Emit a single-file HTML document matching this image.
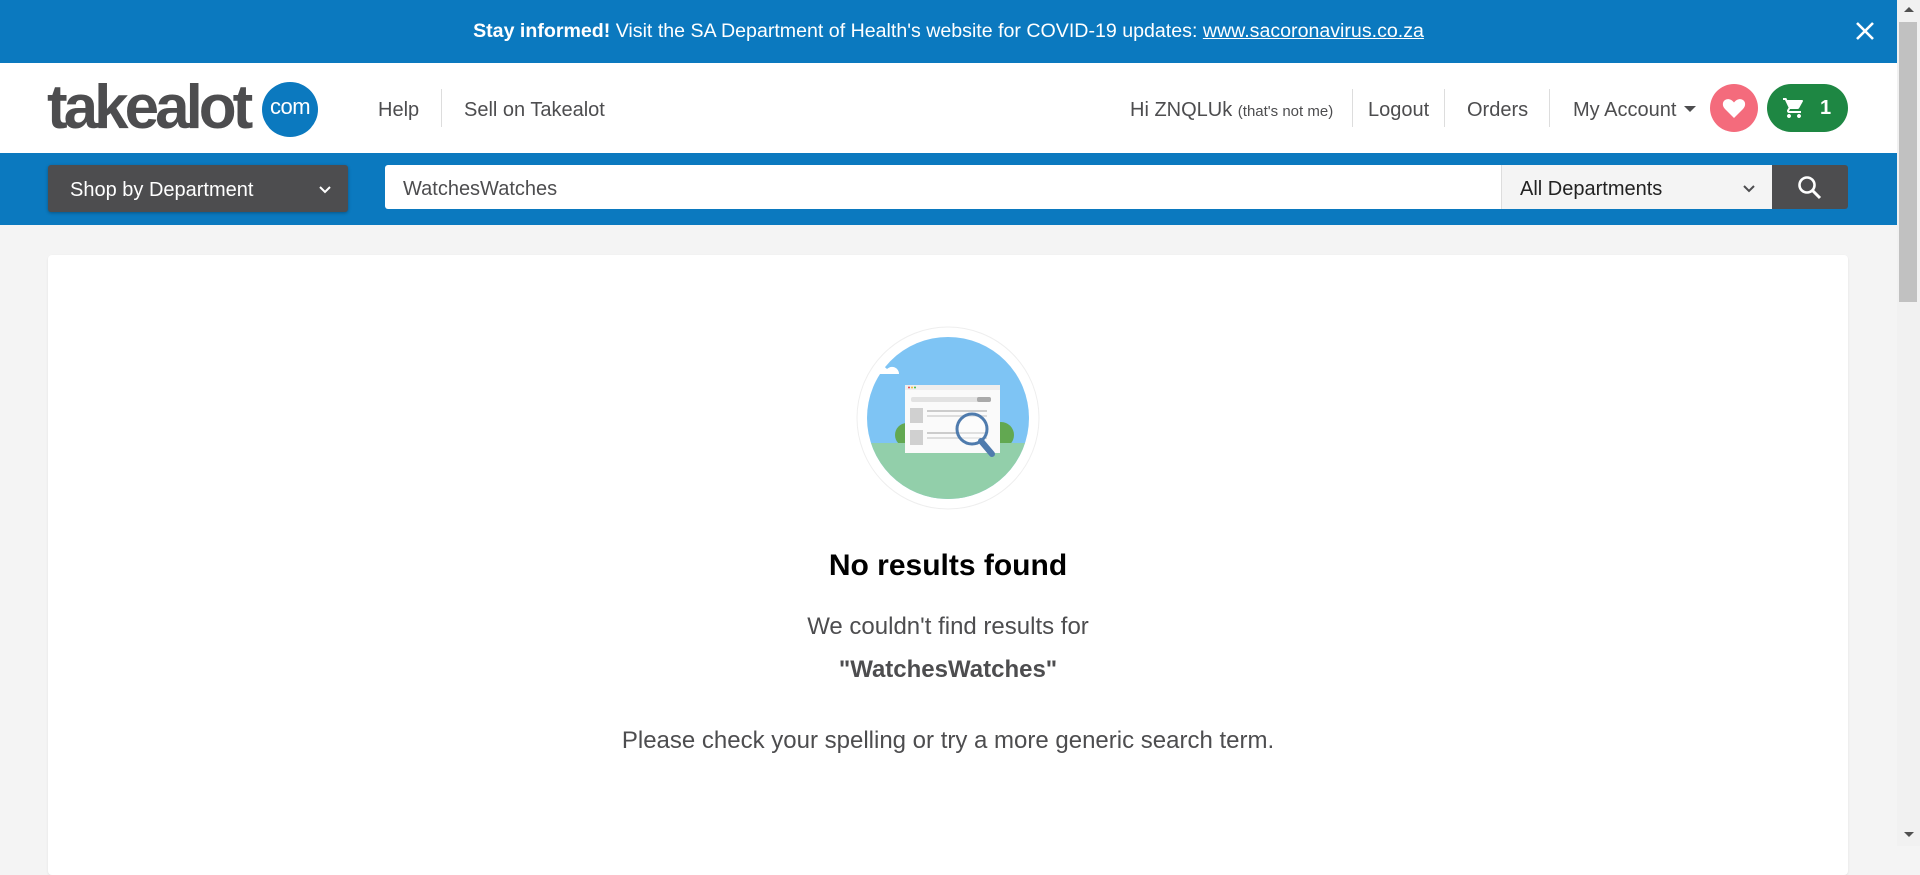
<!DOCTYPE html>
<html><head><meta charset="utf-8"><style>
*{margin:0;padding:0;box-sizing:border-box}
body{width:1920px;height:846px;overflow:hidden;background:#f4f4f4;font-family:"Liberation Sans",Arial,sans-serif;position:relative;color:#4d4d4f}
.abs{position:absolute}
#banner{left:0;top:0;width:1897px;height:63px;background:#0b79bf;color:#fff;font-size:19.6px;text-align:center;line-height:62px}
#banner a{color:#fff;text-decoration:underline}
#hdr{left:0;top:63px;width:1897px;height:90px;background:#fff}
#bar{left:0;top:153px;width:1897px;height:72px;background:#0b79bf}
.nav{font-size:20px;color:#4d4d4f;top:99px}
.sep{width:1px;height:38px;background:#ddd;top:89px}
#card{left:48px;top:255px;width:1800px;height:620px;background:#fff;border-radius:4px;box-shadow:0 1px 2px rgba(0,0,0,.08)}
#sb{left:1897px;top:0;width:23px;height:846px;background:#f1f1f1}
.c{left:48px;width:1800px;text-align:center}
</style></head><body>
<div id="banner" class="abs"><b>Stay informed!</b> Visit the SA Department of Health's website for COVID-19 updates: <a>www.sacoronavirus.co.za</a></div>
<svg class="abs" style="left:1855px;top:21px" width="20" height="20" viewBox="0 0 20 20"><path d="M2 2L18 18M18 2L2 18" stroke="#fff" stroke-width="2.6"/></svg>
<div id="hdr" class="abs"></div>
<div class="abs" style="left:47px;top:72px;font-size:62px;font-weight:bold;color:#4d4d4f;letter-spacing:-4px">takealot</div>
<div class="abs" style="left:262px;top:82px;width:56px;height:55px;border-radius:50%;background:#0b79bf;color:#fff;font-size:22px;text-align:center;line-height:50px;letter-spacing:-0.5px">com</div>
<div class="abs nav" style="left:378px">Help</div>
<div class="abs sep" style="left:441px"></div>
<div class="abs nav" style="left:464px">Sell on Takealot</div>
<div class="abs nav" style="left:1130px">Hi ZNQLUk <span style="font-size:15px">(that's not me)</span></div>
<div class="abs sep" style="left:1352px"></div>
<div class="abs nav" style="left:1368px">Logout</div>
<div class="abs sep" style="left:1444px"></div>
<div class="abs nav" style="left:1467px">Orders</div>
<div class="abs sep" style="left:1549px"></div>
<div class="abs nav" style="left:1573px">My Account</div>
<div class="abs" style="left:1684px;top:106px;border-left:6px solid transparent;border-right:6px solid transparent;border-top:6px solid #4d4d4f"></div>
<div class="abs" style="left:1710px;top:84px;width:48px;height:48px;border-radius:50%;background:#f46b7c"></div>
<svg class="abs" style="left:1722px;top:97px" width="24" height="22" viewBox="0 0 24 22"><path d="M12 21L3 12C0 9 0 4 4 2.5 7 1.5 10 3 12 5.5 14 3 17 1.5 20 2.5 24 4 24 9 21 12Z" fill="#fff"/></svg>
<div class="abs" style="left:1767px;top:84px;width:81px;height:48px;border-radius:24px;background:#1e8743;color:#fff;font-size:20px;font-weight:bold;line-height:48px;padding-left:53px">1</div>
<svg class="abs" style="left:1782px;top:96px" width="24" height="24" viewBox="0 0 24 24"><path d="M7 18c-1.1 0-2 .9-2 2s.9 2 2 2 2-.9 2-2-.9-2-2-2zM1 2v2h2l3.6 7.6-1.4 2.4c-.1.3-.2.6-.2 1 0 1.1.9 2 2 2h12v-2H7.4c-.1 0-.3-.1-.3-.3v-.1l.9-1.6h7.5c.8 0 1.4-.4 1.7-1l3.6-6.5c.1-.2.2-.3.2-.5 0-.6-.4-1-1-1H5.2l-.9-2H1zm16 16c-1.1 0-2 .9-2 2s.9 2 2 2 2-.9 2-2-.9-2-2-2z" fill="#fff"/></svg>
<div id="bar" class="abs"></div>
<div class="abs" style="left:48px;top:165px;width:300px;height:47px;background:#4d4d4f;border-radius:3px;box-shadow:0 1px 3px rgba(0,0,0,.3);color:#fff;font-size:20px;line-height:51px;padding-left:22px">Shop by Department</div>
<svg class="abs" style="left:318px;top:185px" width="14" height="10" viewBox="0 0 14 10"><path d="M2 2L7 7 12 2" stroke="#fff" stroke-width="2" fill="none"/></svg>
<div class="abs" style="left:385px;top:165px;width:1116px;height:44px;background:#fff;border-radius:3px 0 0 3px;font-size:20px;line-height:48px;padding-left:18px;color:#4d4d4f">WatchesWatches</div>
<div class="abs" style="left:1501px;top:165px;width:271px;height:44px;background:#f4f4f4;border-left:1px solid #ddd;font-size:20px;line-height:48px;padding-left:18px;color:#222">All Departments</div>
<svg class="abs" style="left:1742px;top:184px" width="14" height="10" viewBox="0 0 14 10"><path d="M2 2L7 7 12 2" stroke="#4d4d4f" stroke-width="2" fill="none"/></svg>
<div class="abs" style="left:1772px;top:165px;width:76px;height:44px;background:#4d4d4f;border-radius:0 3px 3px 0"></div>
<svg class="abs" style="left:1797px;top:175px" width="26" height="26" viewBox="0 0 26 26"><circle cx="10" cy="10" r="7.5" stroke="#fff" stroke-width="2.6" fill="none"/><path d="M15.5 15.5L23 23" stroke="#fff" stroke-width="3"/></svg>
<div id="card" class="abs"></div>
<svg class="abs" style="left:855px;top:325px" width="186" height="186" viewBox="0 0 186 186">
<defs><clipPath id="cp"><circle cx="93" cy="93" r="81"/></clipPath></defs>
<circle cx="93" cy="93" r="91" fill="#fff" stroke="#eee" stroke-width="1"/>
<g clip-path="url(#cp)">
<rect x="0" y="0" width="186" height="186" fill="#7ec4f4"/>
<circle cx="100" cy="110" r="1" fill="none"/>
<circle cx="52" cy="110" r="12" fill="#62a851"/><circle cx="146" cy="110" r="13" fill="#62a851"/>
<rect x="0" y="118" width="186" height="70" fill="#92cfaa"/>
<rect x="50" y="60" width="95" height="68" fill="#fafafa"/>
<rect x="50" y="60" width="95" height="5" fill="#eee"/>
<circle cx="54" cy="62.5" r="1" fill="#e44"/><circle cx="57" cy="62.5" r="1" fill="#eb3"/><circle cx="60" cy="62.5" r="1" fill="#4b4"/>
<rect x="56" y="72" width="80" height="5" rx="2" fill="#e2e2e2"/><rect x="122" y="72" width="14" height="5" rx="2" fill="#aaa"/>
<rect x="55" y="83" width="13" height="15" fill="#d0d0d0"/><rect x="55" y="105" width="13" height="15" fill="#d0d0d0"/>
<rect x="72" y="85" width="60" height="2" fill="#ccc"/><rect x="72" y="90" width="60" height="2" fill="#ddd"/><rect x="72" y="107" width="60" height="2" fill="#ccc"/><rect x="72" y="112" width="60" height="2" fill="#ddd"/>
<circle cx="117" cy="104" r="15" fill="rgba(255,255,255,.4)" stroke="#4f7bad" stroke-width="3"/>
<path d="M126 116L137 129" stroke="#4f7bad" stroke-width="6" stroke-linecap="round"/>
</g>
<path d="M16 48a9 9 0 0 1 16-4a7 7 0 0 1 12 5h-28z" fill="#fff"/>
</svg>
<div class="abs c" style="top:549px;font-size:30px;font-weight:bold;color:#000">No results found</div>
<div class="abs c" style="top:613px;font-size:24px">We couldn't find results for</div>
<div class="abs c" style="top:656px;font-size:24px;font-weight:bold">"WatchesWatches"</div>
<div class="abs c" style="top:727px;font-size:24px">Please check your spelling or try a more generic search term.</div>
<div id="sb" class="abs"></div>
<div class="abs" style="left:1899px;top:22px;width:18px;height:280px;background:#c1c1c1"></div>
<div class="abs" style="left:1904px;top:7px;border-left:5px solid transparent;border-right:5px solid transparent;border-bottom:5px solid #505050"></div>
<div class="abs" style="left:1904px;top:832px;border-left:5px solid transparent;border-right:5px solid transparent;border-top:5px solid #505050"></div>
</body></html>
